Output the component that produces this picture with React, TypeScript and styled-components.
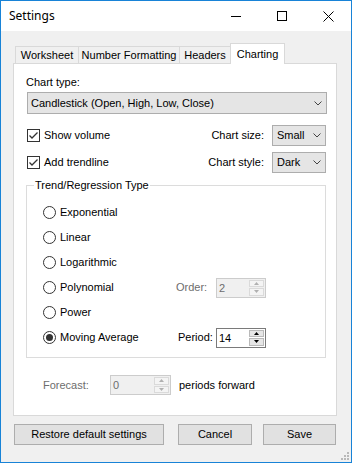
import React from 'react';
import styled, { createGlobalStyle } from 'styled-components';

const Global = createGlobalStyle`
  html, body { margin: 0; padding: 0; background: #fff; }
  body { font-family: "Liberation Sans", Arial, sans-serif; font-size: 11px; color: #000; }
  * { box-sizing: border-box; }
`;

const Window = styled.div`
  position: relative;
  width: 352px;
  height: 463px;
  border: 1px solid #1883d7;
  background: #f0f0f0;
  display: flex;
  flex-direction: column;
`;

const TitleBar = styled.div`
  height: 30px;
  background: #fff;
  display: flex;
  align-items: center;
`;

const Title = styled.div`
  flex: 1;
  padding-left: 8px;
  font-family: "Noto Sans", sans-serif;
  font-size: 12px;
  line-height: 16px;
  color: #000;
`;

const CaptionButton = styled.div`
  width: 46px;
  height: 30px;
  display: flex;
  align-items: center;
  justify-content: center;
`;

const Body = styled.div`
  flex: 1;
  padding: 12px 14px 0 12px;
  display: flex;
  flex-direction: column;
`;

const TabStrip = styled.div`
  height: 20px;
  display: flex;
  align-items: flex-end;
  padding-left: 2px;
`;

const Tab = styled.div<{ $active?: boolean; $w: number }>`
  width: ${p => p.$w}px;
  height: ${p => (p.$active ? 21 : 17)}px;
  margin-bottom: ${p => (p.$active ? -1 : 0)}px;
  border: 1px solid #d9d9d9;
  border-bottom: none;
  background: ${p => (p.$active ? '#fff' : '#f0f0f0')};
  position: relative;
  z-index: ${p => (p.$active ? 1 : 0)};
  display: flex;
  align-items: center;
  justify-content: center;
  line-height: 13px;
  & + & { margin-left: -1px; }
`;

const Panel = styled.div`
  height: 353px;
  border: 1px solid #d9d9d9;
  background: #fff;
  padding: 12px 9px 0 12px;
  display: flex;
  flex-direction: column;
`;

const Label = styled.div<{ $disabled?: boolean }>`
  line-height: 13px;
  white-space: nowrap;
  color: ${p => (p.$disabled ? '#6d6d6d' : '#000')};
`;

const Select = styled.div<{ $w?: number }>`
  ${p => (p.$w ? `width: ${p.$w}px;` : '')}
  height: ${p => (p.$w ? 21 : 22)}px;
  border: 1px solid #adadad;
  background: #e5e5e5;
  display: flex;
  align-items: center;
  padding-left: ${p => (p.$w ? 4 : 3)}px;
  padding-right: 4px;
  line-height: 13px;
`;

const SelectText = styled.div`
  flex: 1;
  white-space: nowrap;
`;

const ChartTypeSelect = styled(Select)`
  margin-top: 3px;
  margin-left: 1px;
`;

const OptionRow = styled.div<{ $gap: number }>`
  margin-top: ${p => p.$gap}px;
  height: 21px;
  display: flex;
  align-items: center;
  justify-content: space-between;
`;

const CheckWrap = styled.div`
  display: flex;
  align-items: center;
  gap: 4px;
  margin-left: 1px;
`;

const Box = styled.div`
  width: 13px;
  height: 13px;
  border: 1px solid #333;
  background: #fff;
  display: flex;
  align-items: center;
  justify-content: center;
`;

const RightGroup = styled.div`
  display: flex;
  align-items: center;
  gap: 8px;
  margin-right: 1px;
`;

const Fieldset = styled.fieldset`
  margin: 6px 1px 0 0;
  padding: 8px 0 7px 0;
  border: 1px solid #dcdcdc;
  min-width: 0;
`;

const Legend = styled.legend`
  margin-left: 7px;
  padding: 0 1px;
  line-height: 13px;
`;

const RadioList = styled.div`
  padding-left: 16px;
  display: flex;
  flex-direction: column;
`;

const RadioRow = styled.div`
  height: 25px;
  display: grid;
  grid-template-columns: 133px 40px 50px;
  align-items: center;
`;

const RadioLabel = styled.div`
  display: flex;
  align-items: center;
  gap: 4px;
  line-height: 13px;
`;

const Circle = styled.div`
  width: 13px;
  height: 13px;
  border-radius: 50%;
  border: 1px solid #333;
  background: #fff;
  display: flex;
  align-items: center;
  justify-content: center;
`;

const Dot = styled.div`
  width: 7px;
  height: 7px;
  border-radius: 50%;
  background: #333;
`;

const FieldLabel = styled(Label)<{ $indent?: number }>`
  padding-left: ${p => p.$indent || 0}px;
`;

const Spin = styled.div<{ $disabled?: boolean; $w: number }>`
  width: ${p => p.$w}px;
  height: 20px;
  border: 1px solid ${p => (p.$disabled ? '#cccccc' : '#7a7a7a')};
  background: ${p => (p.$disabled ? '#f0f0f0' : '#fff')};
  display: flex;
`;

const SpinValue = styled.div<{ $disabled?: boolean }>`
  flex: 1;
  padding-left: 2px;
  line-height: 18px;
  color: ${p => (p.$disabled ? '#6d6d6d' : '#000')};
`;

const SpinButtons = styled.div`
  width: 16px;
  padding: 1px 1px 1px 0;
  display: flex;
  flex-direction: column;
  gap: 1px;
`;

const SpinHalf = styled.div<{ $disabled?: boolean }>`
  flex: 1;
  border: 1px solid ${p => (p.$disabled ? '#dadada' : '#b9b9b9')};
  background: ${p => (p.$disabled ? '#f4f4f4' : '#e6e6e6')};
  display: flex;
  align-items: center;
  justify-content: center;
`;

const ForecastRow = styled.div`
  margin-top: 17px;
  padding-left: 17px;
  height: 20px;
  display: flex;
  align-items: center;
`;

const ForecastLabel = styled(Label)`
  width: 67px;
`;

const Suffix = styled(Label)`
  margin-left: 8px;
`;

const ButtonRow = styled.div`
  margin-top: 8px;
  height: 21px;
  display: flex;
`;

const Button = styled.div<{ $w: number; $ml: number }>`
  width: ${p => p.$w}px;
  margin-left: ${p => p.$ml}px;
  height: 21px;
  border: 1px solid #adadad;
  background: #e1e1e1;
  display: flex;
  align-items: center;
  justify-content: center;
  line-height: 13px;
  white-space: nowrap;
`;

const Grip = styled.svg`
  position: absolute;
  right: 0;
  bottom: 0;
`;

const Chevron = () => (
  <svg width="8" height="5" viewBox="0 0 8 5">
    <polyline points="0.5,0.5 4,4 7.5,0.5" fill="none" stroke="#444" strokeWidth="1" />
  </svg>
);

const Check = () => (
  <svg width="11" height="11" viewBox="0 0 11 11">
    <polyline points="1.5,5.5 4,8 9.5,2.5" fill="none" stroke="#333" strokeWidth="1.3" />
  </svg>
);

const Tri = ({ up, color }: { up?: boolean; color: string }) => (
  <svg width="5" height="3" viewBox="0 0 5 3">
    <polygon points={up ? '2.5,0 5,3 0,3' : '0,0 5,0 2.5,3'} fill={color} />
  </svg>
);

const SpinBox = ({ value, w, disabled }: { value: string; w: number; disabled?: boolean }) => (
  <Spin $w={w} $disabled={disabled}>
    <SpinValue $disabled={disabled}>{value}</SpinValue>
    <SpinButtons>
      <SpinHalf $disabled={disabled}><Tri up color={disabled ? '#b0b0b0' : '#000'} /></SpinHalf>
      <SpinHalf $disabled={disabled}><Tri color={disabled ? '#b0b0b0' : '#000'} /></SpinHalf>
    </SpinButtons>
  </Spin>
);

const Radio = ({ label, checked }: { label: string; checked?: boolean }) => (
  <RadioLabel>
    <Circle>{checked && <Dot />}</Circle>
    <span>{label}</span>
  </RadioLabel>
);

const CheckBox = ({ label }: { label: string }) => (
  <CheckWrap>
    <Box><Check /></Box>
    <Label>{label}</Label>
  </CheckWrap>
);

export default function App() {
  return (
    <>
      <Global />
      <Window>
        <TitleBar>
          <Title>Settings</Title>
          <CaptionButton>
            <svg width="10" height="10" viewBox="0 0 10 10">
              <line x1="0" y1="5.5" x2="10" y2="5.5" stroke="#000" strokeWidth="1" />
            </svg>
          </CaptionButton>
          <CaptionButton>
            <svg width="10" height="10" viewBox="0 0 10 10">
              <rect x="0.5" y="0.5" width="9" height="9" fill="none" stroke="#000" strokeWidth="1" />
            </svg>
          </CaptionButton>
          <CaptionButton>
            <svg width="11" height="11" viewBox="0 0 11 11">
              <line x1="0.5" y1="0.5" x2="10.5" y2="10.5" stroke="#000" strokeWidth="1" />
              <line x1="10.5" y1="0.5" x2="0.5" y2="10.5" stroke="#000" strokeWidth="1" />
            </svg>
          </CaptionButton>
        </TitleBar>
        <Body>
          <TabStrip>
            <Tab $w={64}>Worksheet</Tab>
            <Tab $w={102}>Number Formatting</Tab>
            <Tab $w={52}>Headers</Tab>
            <Tab $w={55} $active>Charting</Tab>
          </TabStrip>
          <Panel>
            <Label>Chart type:</Label>
            <ChartTypeSelect>
              <SelectText>Candlestick (Open, High, Low, Close)</SelectText>
              <Chevron />
            </ChartTypeSelect>
            <OptionRow $gap={11}>
              <CheckBox label="Show volume" />
              <RightGroup>
                <Label>Chart size:</Label>
                <Select $w={54}>
                  <SelectText>Small</SelectText>
                  <Chevron />
                </Select>
              </RightGroup>
            </OptionRow>
            <OptionRow $gap={6}>
              <CheckBox label="Add trendline" />
              <RightGroup>
                <Label>Chart style:</Label>
                <Select $w={54}>
                  <SelectText>Dark</SelectText>
                  <Chevron />
                </Select>
              </RightGroup>
            </OptionRow>
            <Fieldset>
              <Legend>Trend/Regression Type</Legend>
              <RadioList>
                <RadioRow><Radio label="Exponential" /></RadioRow>
                <RadioRow><Radio label="Linear" /></RadioRow>
                <RadioRow><Radio label="Logarithmic" /></RadioRow>
                <RadioRow>
                  <Radio label="Polynomial" />
                  <FieldLabel $disabled>Order:</FieldLabel>
                  <SpinBox value="2" w={50} disabled />
                </RadioRow>
                <RadioRow><Radio label="Power" /></RadioRow>
                <RadioRow>
                  <Radio label="Moving Average" checked />
                  <FieldLabel $indent={2}>Period:</FieldLabel>
                  <SpinBox value="14" w={50} />
                </RadioRow>
              </RadioList>
            </Fieldset>
            <ForecastRow>
              <ForecastLabel $disabled>Forecast:</ForecastLabel>
              <SpinBox value="0" w={61} disabled />
              <Suffix>periods forward</Suffix>
            </ForecastRow>
          </Panel>
          <ButtonRow>
            <Button $w={150} $ml={1}>Restore default settings</Button>
            <Button $w={74} $ml={14}>Cancel</Button>
            <Button $w={73} $ml={11}>Save</Button>
          </ButtonRow>
        </Body>
        <Grip width="12" height="12" viewBox="0 0 12 12">
          <rect x="8" y="2" width="2" height="2" fill="#b8b8b8" />
          <rect x="5" y="5" width="2" height="2" fill="#b8b8b8" />
          <rect x="8" y="5" width="2" height="2" fill="#b8b8b8" />
          <rect x="2" y="8" width="2" height="2" fill="#b8b8b8" />
          <rect x="5" y="8" width="2" height="2" fill="#b8b8b8" />
          <rect x="8" y="8" width="2" height="2" fill="#b8b8b8" />
        </Grip>
      </Window>
    </>
  );
}
